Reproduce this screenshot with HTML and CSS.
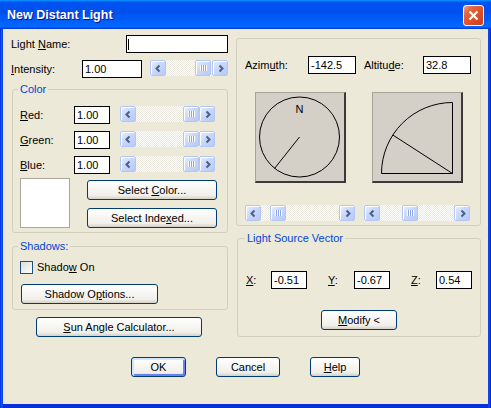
FILE: index.html
```html
<!DOCTYPE html>
<html lang="en">
<head>
 <meta charset="UTF-8">
 <title>New Distant Light</title>
 <link rel="stylesheet" href="styles.css">
</head>
<body>
 <div class="window">
 <div class="titlebar">
 <span class="title">New Distant Light</span>
 <span class="close">
 <svg width="11" height="11" viewBox="0 0 11 11"><path d="M1.5 1.5 9.5 9.5M9.5 1.5 1.5 9.5"/></svg>
 </span>
 </div>

 <div class="client">
 <div class="main">
 <div class="left">
 <div class="row name-row">
 <span class="label">Light <u>N</u>ame:</span>
 <div class="text name-field"><span class="caret"></span></div>
 </div>
 <div class="row intensity-row">
 <span class="label w71"><u>I</u>ntensity:</span>
 <input class="text w60" value="1.00">
 <div class="sb sb-intensity">
 <span class="sb-btn"><svg viewBox="0 0 9 9"><path d="M5.5 1.5 2.5 4.5 5.5 7.5"/></svg></span>
 <span class="sb-track" style="width:29px"></span>
 <span class="sb-thumb"></span>
 <span class="sb-track fill"></span>
 <span class="sb-btn"><svg viewBox="0 0 9 9"><path d="M3.5 1.5 6.5 4.5 3.5 7.5"/></svg></span>
 </div>
 </div>

 <fieldset class="group color-group">
 <legend>Color</legend>
 <div class="row color-row">
 <span class="label w54"><u>R</u>ed:</span>
 <input class="text w36" value="1.00">
 <div class="sb sb-color">
 <span class="sb-btn"><svg viewBox="0 0 9 9"><path d="M5.5 1.5 2.5 4.5 5.5 7.5"/></svg></span>
 <span class="sb-track" style="width:47px"></span>
 <span class="sb-thumb"></span>
 <span class="sb-track fill"></span>
 <span class="sb-btn"><svg viewBox="0 0 9 9"><path d="M3.5 1.5 6.5 4.5 3.5 7.5"/></svg></span>
 </div>
 </div>
 <div class="row color-row">
 <span class="label w54"><u>G</u>reen:</span>
 <input class="text w36" value="1.00">
 <div class="sb sb-color">
 <span class="sb-btn"><svg viewBox="0 0 9 9"><path d="M5.5 1.5 2.5 4.5 5.5 7.5"/></svg></span>
 <span class="sb-track" style="width:47px"></span>
 <span class="sb-thumb"></span>
 <span class="sb-track fill"></span>
 <span class="sb-btn"><svg viewBox="0 0 9 9"><path d="M3.5 1.5 6.5 4.5 3.5 7.5"/></svg></span>
 </div>
 </div>
 <div class="row color-row">
 <span class="label w54"><u>B</u>lue:</span>
 <input class="text w36" value="1.00">
 <div class="sb sb-color">
 <span class="sb-btn"><svg viewBox="0 0 9 9"><path d="M5.5 1.5 2.5 4.5 5.5 7.5"/></svg></span>
 <span class="sb-track" style="width:47px"></span>
 <span class="sb-thumb"></span>
 <span class="sb-track fill"></span>
 <span class="sb-btn"><svg viewBox="0 0 9 9"><path d="M3.5 1.5 6.5 4.5 3.5 7.5"/></svg></span>
 </div>
 </div>
 <div class="swatch-row">
 <div class="swatch"></div>
 <div class="swatch-btns">
 <button class="btn">Select <u>C</u>olor...</button>
 <button class="btn">Select Inde<u>x</u>ed...</button>
 </div>
 </div>
 </fieldset>

 <fieldset class="group shadows-group">
 <legend>Shadows:</legend>
 <label class="check"><span class="check-box"></span><span>Shado<u>w</u> On</span></label>
 <button class="btn shadow-btn">Shadow O<u>p</u>tions...</button>
 </fieldset>

 <button class="btn sun-btn"><u>S</u>un Angle Calculator...</button>
 </div>

 <div class="right">
 <div class="group angle-group">
 <div class="row">
 <span class="label w63">Azim<u>u</u>th:</span>
 <input class="text w48" value="-142.5">
 <span class="label w59 alt-label">Altitu<u>d</u>e:</span>
 <input class="text w48" value="32.8">
 </div>
 <div class="pics">
 <div class="pic">
 <svg width="88" height="88" viewBox="0 0 88 88">
 <circle cx="43.5" cy="44" r="40"/>
 <line x1="43.5" y1="44" x2="18.5" y2="75.5"/>
 <text x="43.5" y="20" text-anchor="middle">N</text>
 </svg>
 </div>
 <div class="pic pic-alt">
 <svg width="88" height="88" viewBox="0 0 88 88">
 <path d="M8.5 80.5 H79.5 V9.5 A71 71 0 0 0 8.5 80.5"/>
 <line x1="79.5" y1="80.5" x2="19.8" y2="42"/>
 </svg>
 </div>
 </div>
 <div class="pic-sbs">
 <div class="sb sb-az">
 <span class="sb-btn"><svg viewBox="0 0 9 9"><path d="M5.5 1.5 2.5 4.5 5.5 7.5"/></svg></span>
 <span class="sb-track" style="width:9px"></span>
 <span class="sb-thumb"></span>
 <span class="sb-track fill"></span>
 <span class="sb-btn"><svg viewBox="0 0 9 9"><path d="M3.5 1.5 6.5 4.5 3.5 7.5"/></svg></span>
 </div>
 <div class="sb sb-alt">
 <span class="sb-btn"><svg viewBox="0 0 9 9"><path d="M5.5 1.5 2.5 4.5 5.5 7.5"/></svg></span>
 <span class="sb-track" style="width:22px"></span>
 <span class="sb-thumb"></span>
 <span class="sb-track fill"></span>
 <span class="sb-btn"><svg viewBox="0 0 9 9"><path d="M3.5 1.5 6.5 4.5 3.5 7.5"/></svg></span>
 </div>
 </div>
 </div>

 <fieldset class="group vector-group">
 <legend>Light Source Vector</legend>
 <div class="row">
 <span class="label w25"><u>X</u>:</span>
 <input class="text w36" value="-0.51">
 <span class="label w26 gap21"><u>Y</u>:</span>
 <input class="text w36" value="-0.67">
 <span class="label w25 gap21"><u>Z</u>:</span>
 <input class="text w36" value="0.54">
 </div>
 <button class="btn modify-btn"><u>M</u>odify &lt;</button>
 </fieldset>
 </div>
 </div>

 <div class="footer">
 <button class="btn default ok-btn">OK</button>
 <button class="btn cancel-btn">Cancel</button>
 <button class="btn help-btn"><u>H</u>elp</button>
 </div>
 </div>
 </div>
</body>
</html>
```

FILE: styles.css
```css
* {
margin: 0;
padding: 0;
box-sizing: border-box;
}

body {
font-family: 'Liberation Sans', Arial, sans-serif;
font-size: 11px;
line-height: 13px;
color: #000;
background: #ECE9D8;
}

.window {
width: 491px;
height: 408px;
display: flex;
flex-direction: column;
background: linear-gradient(90deg, #0019cf, #0a5af0 1px, #0a5af0 2px, #0831d9 3px, #0831d9 488px, #0a5af0 489px, #0019cf);
}

/* title bar */
.titlebar {
height: 29px;
flex: none;
display: flex;
align-items: center;
justify-content: space-between;
padding: 1px 7px 0 7px;
background: linear-gradient(180deg, #0997ff, #0053ee 8%, #0050ee 40%, #0066ff 88%, #0066ff 93%, #005bff 95%, #003dd7 96%, #003dd7);
}

.title {
color: #fff;
font-weight: bold;
font-size: 12.5px;
text-shadow: 1px 1px #0f1089;
}

.close {
width: 21px;
height: 21px;
display: flex;
align-items: center;
justify-content: center;
border: 1px solid #fff;
border-radius: 3px;
background: linear-gradient(135deg, #f0a48a 0%, #e5653e 25%, #de4f26 60%, #c93d18 100%);
}

.close svg path {
stroke: #fff;
stroke-width: 2.2;
fill: none;
}

/* dialog body */
.client {
flex: 1;
margin: 0 3px 4px;
background: #ECE9D8;
padding: 6px 7px 0 8px;
}

.main {
display: flex;
gap: 8px;
}

.left {
width: 217px;
display: flex;
flex-direction: column;
}

.right {
width: 245px;
margin-top: 3px;
display: flex;
flex-direction: column;
}

.row {
display: flex;
align-items: flex-start;
height: 18px;
}

.label {
line-height: 18px;
white-space: nowrap;
}

.w25 { width: 25px; }
.w26 { width: 26px; }
.w54 { width: 54px; }
.w59 { width: 59px; }
.w63 { width: 63px; }
.w71 { width: 71px; }
.w36 { width: 36px; }
.w48 { width: 48px; }
.w60 { width: 60px; }

.text {
height: 18px;
border: 1px solid #000;
background: #fff;
padding: 0 2px;
font: inherit;
color: #000;
outline: none;
}

.name-row {
justify-content: space-between;
}

.name-field {
width: 102px;
padding: 3px 1px;
}

.caret {
display: block;
width: 1px;
height: 11px;
background: #000;
}

.intensity-row {
margin-top: 7px;
}

/* scrollbars */
.sb {
display: flex;
height: 16px;
background: repeating-conic-gradient(#fdfdfa 0 25%, #eae8df 0 50%) 0 0 / 2px 2px;
}

.sb-intensity { width: 78px; margin-left: 8px; }
.sb-color { width: 94px; margin-left: 10px; }
.sb-az { width: 110px; }
.sb-alt { width: 106px; margin-left: 9px; }

.sb-btn,
.sb-thumb {
width: 16px;
height: 16px;
flex: none;
display: flex;
align-items: center;
justify-content: center;
border: 1px solid #b4c6f2;
border-radius: 2px;
background: linear-gradient(135deg, #e8efff, #c9d8fc 45%, #b6c9f6);
box-shadow: inset 1px 1px #fff;
}

.sb-btn svg {
width: 9px;
height: 9px;
}

.sb-btn path {
fill: none;
stroke: #4d6185;
stroke-width: 2;
}

.sb-thumb::after {
content: '';
width: 7px;
height: 6px;
background: repeating-linear-gradient(90deg, #fff 0 1px, #8ca5e5 1px 2px);
}

.sb-track {
flex: none;
}

.sb-track.fill {
flex: 1;
}

/* group boxes */
.group {
border: 1px solid #d0d0bf;
border-radius: 3px;
margin-left: 1px;
min-width: 0;
}

.group legend {
color: #0046d5;
padding: 0 2px;
margin-left: -2px;
line-height: 13px;
}

.color-group {
margin-top: 5px;
padding: 10px 0 4px 7px;
}

.color-row + .color-row {
margin-top: 7px;
}

.swatch-row {
display: flex;
margin-top: 4px;
}

.swatch {
width: 50px;
height: 50px;
border: 1px solid #aca899;
background: #fff;
}

.swatch-btns {
display: flex;
flex-direction: column;
gap: 8px;
margin: 2px 0 0 17px;
}

.swatch-btns .btn {
width: 130px;
}

.shadows-group {
margin-top: 7px;
padding: 8px 0 5px 7px;
}

.check {
display: flex;
align-items: center;
height: 13px;
gap: 4px;
}

.check-box {
width: 13px;
height: 13px;
border: 1px solid #1c5180;
background: linear-gradient(135deg, #dcdcd7, #fff);
}

.shadow-btn {
width: 137px;
margin: 10px 0 0 1px;
}

.sun-btn {
width: 166px;
margin: 7px 0 0 25px;
}

.angle-group {
margin-left: 0;
padding: 17px 0 4px 8px;
}

.alt-label {
margin-left: 8px;
}

.pics {
display: flex;
margin-top: 18px;
}

.pic {
width: 91px;
height: 91px;
margin-left: 10px;
background: #d4d0c8;
border-style: solid;
border-width: 1px 2px 2px 1px;
border-color: #a7a396 #3a3a3a #3a3a3a #a7a396;
}

.pic-alt {
margin-left: 26px;
}

.pic svg {
display: block;
}

.pic circle,
.pic path,
.pic line {
fill: none;
stroke: #000;
stroke-width: 1;
}

.pic text {
font-family: 'Liberation Sans', Arial, sans-serif;
font-size: 11px;
font-weight: normal;
fill: #000;
}

.pic-sbs {
display: flex;
margin-top: 22px;
}

.vector-group {
margin-top: 6px;
padding: 26px 0 6px 8px;
}

.vector-group legend {
margin-left: -1px;
}

.gap21 {
margin-left: 21px;
}

.modify-btn {
width: 76px;
margin: 21px 0 0 75px;
}

/* push buttons */
.btn {
height: 20px;
border: 1px solid #003c74;
border-radius: 3px;
background: linear-gradient(180deg, #fff, #f0efea 80%, #d6d0c5);
font: inherit;
color: #000;
text-align: center;
}

.btn.default {
box-shadow: inset 1px 1px 0 1px #cee7ff, inset -1px -1px 0 1px #6982ee;
}

.footer {
display: flex;
gap: 30px;
margin: 20px 0 0 120px;
}

.ok-btn { width: 55px; }
.cancel-btn { width: 64px; }
.help-btn { width: 50px; }
```
